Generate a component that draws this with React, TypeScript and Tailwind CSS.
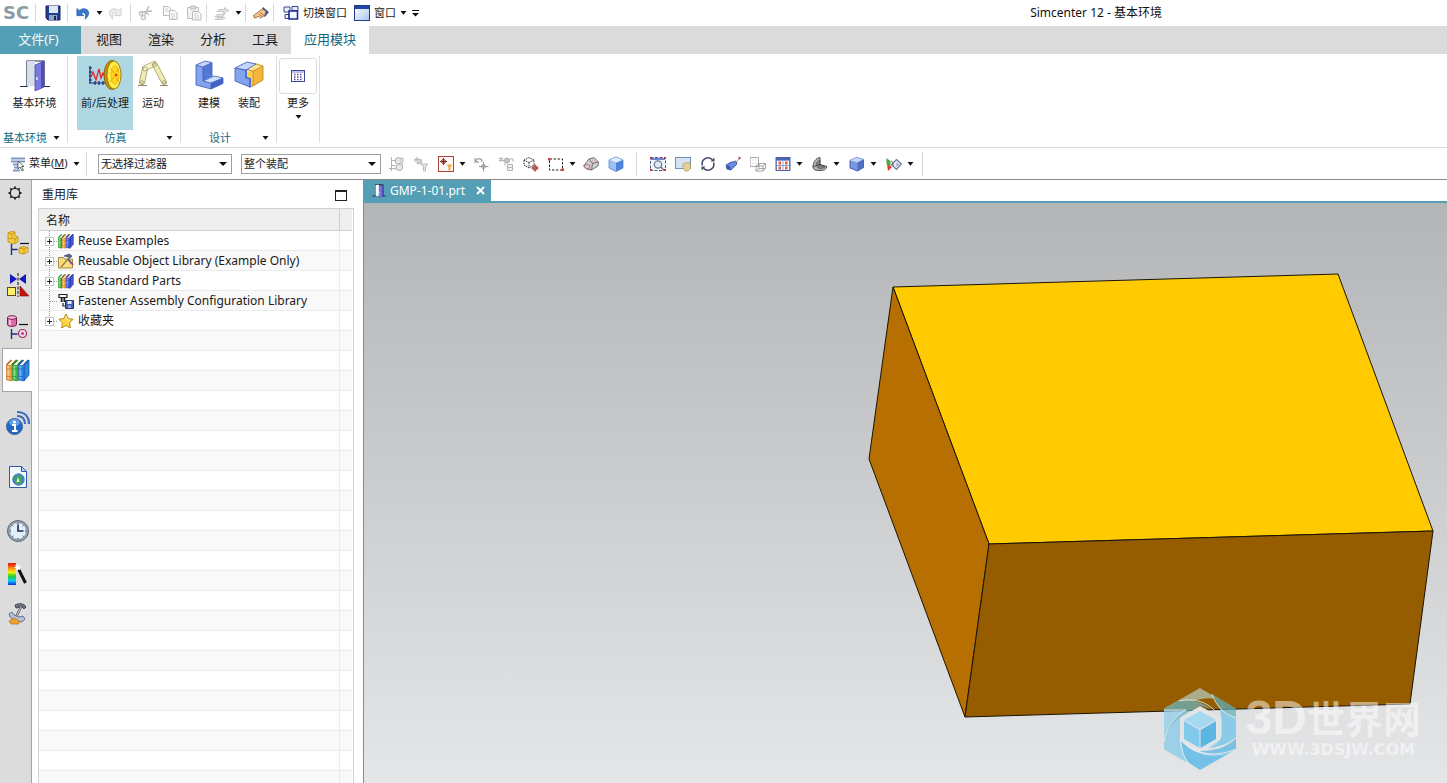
import type { ReactNode } from "react";
import clsx from "clsx";

type IconProps = { size?: number; h?: number; box?: string; children: ReactNode };

function Svg({ size = 16, h, box, children }: IconProps) {
  return (
    <svg width={size} height={h ?? size} viewBox={box ?? "0 0 16 16"} fill="none" className="shrink-0" aria-hidden="true">
      {children}
    </svg>
  );
}

function Caret() {
  return (
    <svg width="7" height="4" viewBox="0 0 7 4" className="shrink-0" aria-hidden="true">
      <path d="M0.5 0h6L3.500 3.800z" fill="#111" />
    </svg>
  );
}

/* ---------- quick access icons ---------- */

const SaveIcon = () => (
  <Svg>
    <path d="M1 1h14v14H3l-2-2z" fill="#23408f" stroke="#14245e" />
    <rect x="4" y="1" width="9" height="7" fill="#dfe8f5" />
    <rect x="4" y="10" width="8" height="5" fill="#8fa3c4" />
    <rect x="9" y="11" width="2" height="4" fill="#14245e" />
  </Svg>
);

const UndoIcon = ({ muted = false }: { muted?: boolean }) => (
  <Svg size={14}>
    <g transform={muted ? "matrix(-1 0 0 1 16 0)" : undefined}>
      <path d="M1 3v8h8L6 8.500c3-2 6-.5 4.500 6.500 5-4 5.500-10 .5-11.500C8.500 2.700 6 3.500 4 5z"
        fill={muted ? "#ececec" : "#3c78c8"} stroke={muted ? "#c4c4c4" : "#2c5ca8"} strokeWidth=".8" />
    </g>
  </Svg>
);

const CutIcon = () => (
  <Svg>
    <path d="M11 1 6.500 10M2 7l12-1M7 7l4 3" stroke="#b9b9b9" strokeWidth="1.300" />
    <circle cx="5.500" cy="12.500" r="2" stroke="#c2c2c2" strokeWidth="1.300" />
    <circle cx="3" cy="8.500" r="1.700" stroke="#c2c2c2" strokeWidth="1.300" />
  </Svg>
);

const CopyIcon = () => (
  <Svg>
    <path d="M1.500 1.500h5l2.500 2.500v6.500H1.500z" fill="#fafafa" stroke="#bdbdbd" />
    <path d="M7.500 5.500h5L15 8v6.500H7.500z" fill="#fafafa" stroke="#bdbdbd" />
    <path d="M3 4h3M3 6h4M9 9h4M9 11h4M9 13h4" stroke="#cfcfcf" />
  </Svg>
);

const PasteIcon = () => (
  <Svg>
    <path d="M1.500 2.500h11v11h-11z" fill="#f2f2f2" stroke="#bdbdbd" />
    <path d="M4.500 1h5v3h-5z" fill="#ddd" stroke="#bdbdbd" />
    <path d="M6.500 6.500h6L15 9v6H6.500z" fill="#fafafa" stroke="#bdbdbd" />
    <path d="M8 9h4M8 11h5M8 13h5" stroke="#cfcfcf" />
  </Svg>
);

const RepeatIcon = () => (
  <Svg>
    <path d="M5 4.500h6l-1-2 5 3-6 3 .5-2H3zM3 9.500h5l3-1-2 3H1zM1 14.500h8l2-2H3z" fill="#e4e4e4" stroke="#bfbfbf" strokeWidth=".8" />
  </Svg>
);

const TouchIcon = () => (
  <Svg>
    <path d="M10 2.500 15.500 7 12 11.500 8 9z" fill="#3850a8" stroke="#243578" strokeWidth=".6" />
    <path d="M.5 10.500 6 6.500 9.500 4l3.500 2-1 4-4.500 3-2-1.500L1.500 13z" fill="#f3c48d" stroke="#8d5a2b" strokeWidth=".8" />
    <path d="m7 8 4 2M6 9.500l3.500 2" stroke="#8d5a2b" strokeWidth=".6" />
  </Svg>
);

const SwitchWindowIcon = () => (
  <Svg>
    <path d="M1 2h6v5H1zM9 1.500h6v4H9zM2 9.500h4v4H2z" fill="#e8edf7" stroke="#3a4a86" />
    <path d="M6 6h8.500v8H6z" fill="#f7f9ff" stroke="#1a2d94" strokeWidth="1.600" />
  </Svg>
);

const WindowIcon = () => (
  <Svg>
    <defs>
      <linearGradient id="win" x1="0" y1="0" x2="1" y2="1">
        <stop offset="0" stopColor="#fff" />
        <stop offset="1" stopColor="#a9c5ef" />
      </linearGradient>
    </defs>
    <rect x=".5" y=".5" width="15" height="15" fill="url(#win)" stroke="#203a8c" />
    <rect x="1" y="1" width="14" height="3" fill="#2346a5" />
  </Svg>
);

/* ---------- ribbon icons ---------- */

const DoorIcon = ({ size = 32, light = false }: { size?: number; light?: boolean }) => (
  <Svg size={size} box="0 0 32 32">
    <path d="M1 27.500h7V2h17v25.500h6" stroke="#222b45" strokeWidth={light ? 2.5 : 1.200} />
    <path d="M8 2h8v25H8z" fill={light ? "#fff" : "#d4dfea"} />
    <path d="M16 6 25 2v26l-9 4z" fill="#7b79e0" stroke="#4a4aa8" strokeWidth=".8" />
    <path d="M22 3.500 25 2v26l-3 1.500z" fill="#4f4eb4" />
    <path d="M18 18v3" stroke="#e8e8ff" strokeWidth="1.500" />
  </Svg>
);

const PrePostIcon = () => (
  <Svg size={34} h={32} box="0 0 34 32">
    <path d="M2 7v17M1 24h18M1 9h3M1 13h3M1 17h3M1 21h3M7 26v-4M11 26v-4M15 26v-4" stroke="#16226e" strokeWidth="1.200" />
    <path d="m3 18 2-5 3 8 3-11 2 9 2-5 2 4 3-3" stroke="#e0242a" strokeWidth="1.300" />
    <ellipse cx="24" cy="16" rx="8" ry="14.500" fill="#c88f00" stroke="#6d5300" strokeWidth=".8" />
    <ellipse cx="26" cy="16" rx="7" ry="14" fill="#ffee4a" stroke="#8f6c00" strokeWidth=".8" />
    <ellipse cx="27" cy="16" rx="4" ry="9.500" fill="#ffd91c" stroke="#f0a01c" strokeWidth=".6" />
    <circle cx="28" cy="16" r="1.500" fill="#e8401a" />
    <path d="M22 9l4 5M22 23l4-5M30 9l-1 4M30 23l-1-4" stroke="#f08a1c" strokeWidth=".8" />
  </Svg>
);

const MotionIcon = () => (
  <Svg size={32} box="0 0 32 32">
    <path d="M1 26.500h9M23 26.500h8" stroke="#8d8960" />
    <path d="m5 23 3-13" stroke="#9c965e" strokeWidth="6" strokeLinecap="round" />
    <path d="m5 23 3-13" stroke="#f0ebb4" strokeWidth="4.600" strokeLinecap="round" />
    <path d="m8 9 9-4" stroke="#9c965e" strokeWidth="5.600" strokeLinecap="round" />
    <path d="m8 9 9-4" stroke="#f5f1c6" strokeWidth="4.200" strokeLinecap="round" />
    <path d="m18 6 9 17" stroke="#9c965e" strokeWidth="5.600" strokeLinecap="round" />
    <path d="m18 6 9 17" stroke="#f0ebb4" strokeWidth="4.200" strokeLinecap="round" />
    <g fill="#fffce0" stroke="#9c965e" strokeWidth=".8">
      <circle cx="8" cy="10" r="2" />
      <circle cx="18" cy="6" r="1.400" />
      <circle cx="5" cy="23" r="1.400" />
      <circle cx="27" cy="23" r="1.400" />
    </g>
  </Svg>
);

const ModelingIcon = () => (
  <Svg size={32} box="0 0 32 32">
    <path d="m10 7 9-3.500v14l-9 4.500z" fill="#5478d6" />
    <path d="m3 6 9-4 7 1.500L10 8z" fill="#c4d7fc" />
    <path d="m10 22 11-5 9 2-12 5z" fill="#cfe0fe" />
    <path d="m18 24 12-5v5.500L18 30z" fill="#3f62c4" />
    <path d="M3 6v20l15 4v-6l-8-2V8z" fill="#83a3ee" />
    <path d="m3 6 9-4 7 1.500V18l2-1 9 2v5.500L18 30 3 26zM3 6l7 2v14l8 2v6M10 8l9-4.500M18 24l12-5M10 22l9-4" stroke="#3e5cb4" strokeWidth=".8" />
  </Svg>
);

const AssemblyIcon = () => (
  <Svg size={32} box="0 0 32 32">
    <path d="m17 9 7-4 6 2v14l-12 7v-9h-4v-6l3-1z" fill="#ffd04a" />
    <path d="m20 12 10-5v14l-10 6z" fill="#f7b63a" />
    <path d="m14 8 10-4 6 3-10 5-6-1z" fill="#ffe78e" />
    <path d="M2 9v13l14 6v-9l-4-1v-6l4-1V9z" fill="#83a3ee" />
    <path d="m2 9 12-6 9 2-9 5v8l4 1v9l-2 1v-9l-4-1v-7z" fill="#5f82da" />
    <path d="m2 9 12-6 9 2-10 6z" fill="#c4d7fc" />
    <path d="m2 9 12-6 9 2-10 6v8l4 1v8L2 22zM2 9l11 2" stroke="#3e5cb4" strokeWidth=".8" />
    <path d="m23 5 7 2v14l-12 7M20 12l10-5M14 11l6 1v15" stroke="#b5852a" strokeWidth=".8" />
  </Svg>
);

const MoreIcon = () => (
  <Svg size={14} h={12} box="0 0 14 12">
    <rect x=".5" y=".5" width="13" height="11" fill="#fff" stroke="#3b4aa0" />
    <path d="M1 2h12" stroke="#7482d0" />
    <path d="M3 4.500h8M3 7h8M3 9.500h8" stroke="#5a4a9a" strokeWidth="1.300" strokeDasharray="1.500 1.500" />
  </Svg>
);

/* ---------- selection bar icons ---------- */

const MenuIcon = () => (
  <Svg>
    <path d="M1 2.500h14M1 5.500h14M3 8.500h6M4 11.500h5M3 14.500h7" stroke="#7d9ac4" strokeWidth="1.800" />
    <path d="M8 5v8l2-2 2 4 1.500-.7-2-3.800H14z" fill="#fff" stroke="#444" strokeWidth=".8" />
  </Svg>
);

const PartTreeIcon = () => (
  <Svg>
    <path d="M3.500 1v14M3.500 4.500h4M3.500 9.500h4M1 12.500h7" stroke="#b0b0b0" />
    <path d="M7.500 3 10 1.500l3 1v4l-2.500 1.500-3-1z" fill="#e6e6e6" stroke="#b0b0b0" />
    <path d="M8 9.500 11 8l3.500 1v4L12 14.500l-4-1zM13 2l2 .5v4l-2 1" fill="#e6e6e6" stroke="#b0b0b0" />
  </Svg>
);

const FilterBackIcon = () => (
  <Svg>
    <path d="M1 4.500 4 2v1.500h3c2 0 2 4-1 4h-2" fill="#d6d6d6" stroke="#bdbdbd" strokeWidth="1.500" />
    <path d="M8 8h7l-2.500 3v4h-2v-4z" fill="#e5e5e5" stroke="#bdbdbd" />
  </Svg>
);

const FilterPointIcon = () => (
  <Svg>
    <rect x=".5" y=".5" width="15" height="15" fill="#fff8f5" stroke="#b4413a" />
    <circle cx="5.500" cy="5.500" r="2" stroke="#7c2b28" />
    <path d="M5.500 2v7M2 5.500h7" stroke="#7c2b28" />
    <path d="M8.500 8.500h6l-2 2.500v3.500h-2V11z" fill="#f6a93c" />
  </Svg>
);

const RotatePointIcon = () => (
  <Svg>
    <path d="M2 2v4h4M2.500 5.500C4 1.500 9 1.500 9 6" stroke="#a6a6a6" strokeWidth="1.300" />
    <circle cx="10.500" cy="10.500" r="2" stroke="#9a9a9a" />
    <path d="M10.500 6v9.500M6 10.500h9.500" stroke="#9a9a9a" />
  </Svg>
);

const SnapIcon = () => (
  <Svg>
    <path d="M1 2.500h4M1 4.500h6" stroke="#b4b4b4" strokeWidth="1.400" />
    <circle cx="9" cy="4.500" r="2.500" fill="#c4c4c4" stroke="#a9a9a9" />
    <path d="M9.500 8.500h5v6h-5zM9.500 11.500h5" fill="#eee" stroke="#b5b5b5" />
    <path d="M7 7v3M12 3h3v3" stroke="#b5b5b5" />
  </Svg>
);

const CubePointIcon = () => (
  <Svg>
    <path d="M1 4 6 1.500l5 2.500v5l-5 3-5-3zM1 4l5 2.500L11 4M6 6.500V12" stroke="#222" strokeDasharray="1.400 1" />
    <circle cx="12" cy="12" r="2.300" fill="#f7dcd8" stroke="#a3282c" />
    <path d="M12 8.500v7M8.500 12h7" stroke="#a3282c" />
  </Svg>
);

const RectSelectIcon = () => (
  <Svg>
    <rect x="1.500" y="3" width="13" height="11" stroke="#222" strokeDasharray="2.500 1.500" />
    <path d="M0 2h2.500v2.500H0zM13.500 12.500H16V15h-2.500z" fill="#d83c3c" />
  </Svg>
);

const SolidIcon = () => (
  <Svg>
    <path d="M.5 10 6 3l5-1.500 4.500 4.500-.5 4-6.500 4-5-1z" fill="#cfcfd6" stroke="#555" strokeWidth=".8" />
    <path d="m6 3 3.500 4.500L15 6M9.500 7.500 8.500 14" stroke="#555" strokeWidth=".8" />
    <path d="M1 10c2-2 4-2 6 0l-1 3-3-.5z" fill="#e9c7cc" stroke="#9c5560" strokeWidth=".7" />
    <path d="M6.500 4 10 3l3 2-3 1z" fill="#e0b8be" />
  </Svg>
);

const GlassCubeIcon = () => (
  <Svg>
    <path d="m1 4 7-3 7 3v8l-7 3.500L1 12z" fill="#9cc0f2" stroke="#5a80c8" strokeWidth=".8" />
    <path d="m1 4 7 3 7-3-7-3z" fill="#e3f0ff" stroke="#88a8dc" strokeWidth=".7" />
    <path d="m8 7 7-3v8l-7 3.500z" fill="#4f82da" />
  </Svg>
);

const FitIcon = () => (
  <Svg>
    <path d="M1 2h14v12H1z" fill="#f4f7fc" />
    <path d="M.5 1.500h15v13H.5z" stroke="#4a5590" strokeDasharray="3 1.500" />
    <path d="M1 2h14v2H1z" fill="#6c86cc" />
    <circle cx="8" cy="8.500" r="3.700" fill="#dfeaf4" stroke="#6b7b8c" strokeWidth="1.300" />
    <path d="m11 11 3 3.500" stroke="#6b7b8c" strokeWidth="1.500" />
    <path d="M0 1h2v2H0zM14 1h2v2h-2zM0 13h2v2H0zM14 13h2v2h-2z" fill="#cf3030" />
  </Svg>
);

const PanIcon = () => (
  <Svg>
    <rect x=".5" y="1.500" width="15" height="11" fill="#d5e2f2" stroke="#7790b8" />
    <path d="M8 8.500 10 7l4-.5 1.500 2v4L13 15h-3l-2-3z" fill="#e8cf96" stroke="#b09350" strokeWidth=".7" />
  </Svg>
);

const RotateIcon = () => (
  <Svg>
    <path d="M2.500 9.500A5.800 5.800 0 0 1 12.500 4M13.500 6.500A5.800 5.800 0 0 1 3.500 12" stroke="#454c6c" strokeWidth="1.500" />
    <path d="M10.500 5.500h4V1.500zM5.500 10.500h-4v4z" fill="#454c6c" />
  </Svg>
);

const PerspectiveIcon = () => (
  <Svg>
    <path d="m1 9 4-2.500L11 5l1 3-6 6-4-1z" fill="#6d8ee0" stroke="#34509c" strokeWidth=".8" />
    <path d="m1 9 4 1 1 4-4-1z" fill="#3a5cb8" />
    <path d="m11 6 3-3" stroke="#999" />
    <circle cx="14.500" cy="2" r="1.200" fill="#d84040" />
  </Svg>
);

const WireIcon = () => (
  <Svg>
    <path d="M.5 1.500h8v9h-8zM3 4h.01M6 4h.01M3 7h.01M6 7h.01" stroke="#a8a8a8" strokeLinecap="round" />
    <path d="m6 10 3-2.500h6.500L13 10zM6 10v5h7v-5M13 15l2.500-2.500v-5M6 15l3-2.500V8M9 12.500h6" stroke="#9c9c9c" strokeWidth=".9" />
  </Svg>
);

const LayoutIcon = () => (
  <Svg>
    <rect x="1" y="1.500" width="14" height="13" fill="#8fa2d4" stroke="#4a5ea4" />
    <path d="M1 2h14v2H1z" fill="#4a64b4" />
    <path d="M2 5h5.500v4H2zM8.500 5H14v4H8.500zM2 10h5.500v4H2zM8.500 10H14v4H8.500z" fill="#fff" />
    <path d="M3.500 5.500h2.500v3H3.500zM10 5.500h2.500v3H10zM3.500 10.500h2.500v3H3.500zM10 10.500h2.500v3H10z" fill="#e0603c" />
  </Svg>
);

const SectionIcon = () => (
  <Svg>
    <path d="M1 11C1 6 4 2 8 1.500v7l7 2c-1 3-3 4-7 4-4 0-7-.5-7-3.500z" fill="#b6b8ba" stroke="#3c3c3c" strokeWidth=".9" />
    <path d="M4 10c0-3 1-5 4-6v4.500zM5 11.500c2 1.500 5 1.500 8-.5L8 9z" fill="#7e8184" stroke="#333" strokeWidth=".5" />
    <path d="M1 11c3-1 5-2 7-2.500" stroke="#333" strokeWidth=".7" />
  </Svg>
);

const ShadedIcon = () => (
  <Svg>
    <path d="M1 4.500 7.500 1.500l7 2v8l-6 3.500-7.500-3z" fill="#7898e4" stroke="#3a56a8" strokeWidth=".9" />
    <path d="M1 4.500 7.500 1.500l7 2-6 3z" fill="#c1d4fb" />
    <path d="m8.500 6.500 6-3v8l-6 3.500z" fill="#5070c4" />
  </Svg>
);

const PlanesIcon = () => (
  <Svg>
    <path d="m.5 2 4 3v5l-4-2z" fill="#48a848" />
    <path d="m1 8 5 3-4 4z" fill="#d83c2c" />
    <path d="m10.500 3.500 5 4.500-5 5.500-5-5z" fill="#e6ebf4" stroke="#66769c" strokeWidth="1.200" />
    <path d="M5 5c2 0 2 3 2 5" stroke="#667" />
    <path d="m10.500 6 2.500 2.500-2.500 2.500z" fill="#96a8cf" />
  </Svg>
);

/* ---------- resource bar icons ---------- */

const GearIcon = () => (
  <Svg>
    <circle cx="8" cy="8" r="4.700" stroke="#222" strokeWidth="1.300" />
    <path d="M8 1.500v2M8 12.500v2M1.500 8h2M12.500 8h2M3.300 3.300l1.400 1.400M11.300 11.300l1.400 1.400M12.700 3.300l-1.400 1.400M4.700 11.300l-1.400 1.400" stroke="#222" strokeWidth="1.800" />
  </Svg>
);

const AssemblyNavIcon = () => (
  <Svg size={24} box="0 0 24 24">
    <path d="m2 2 4-2 3 1v4l3 1v5l-4 2-6-2z" fill="#f8cb3a" stroke="#b88d20" strokeWidth=".8" />
    <path d="m2 2 4 1 3-2M6 3v4l3 1 3-2M9 8v4M2 7l4 1" stroke="#b88d20" strokeWidth=".8" />
    <path d="M14 12.500h9" stroke="#111" strokeWidth="1.200" />
    <path d="M5.500 13v11M5.500 18.500h6" stroke="#1d2c8a" strokeWidth="1.400" />
    <path d="m13 17 4-1.500 5 1V21l-4 2-5-1z" fill="#f8cb3a" stroke="#b88d20" strokeWidth=".8" />
    <path d="m13 17 5 1 4-1.500M18 18v5" stroke="#b88d20" strokeWidth=".8" />
  </Svg>
);

const ConstraintNavIcon = () => (
  <Svg size={24} box="0 0 24 24">
    <path d="M4 1v10l7-5zM20 1v10l-7-5z" fill="#1418c0" />
    <path d="M12 0v24" stroke="#111" strokeDasharray="3 1.500" />
    <rect x="1.500" y="14.500" width="8" height="8" fill="#fff06a" stroke="#5b4a10" />
    <path d="M14 13v10h9z" fill="#c81410" stroke="#7a0c0a" strokeWidth=".6" />
  </Svg>
);

const PartNavIcon = () => (
  <Svg size={24} box="0 0 24 24">
    <path d="M1.500 2.500v7c0 2.500 9 2.500 9 0v-7z" fill="#d66ca8" stroke="#7c1850" />
    <path d="M4 4v6" stroke="#f5bfdc" strokeWidth="2" />
    <ellipse cx="6" cy="2.500" rx="4.500" ry="1.800" fill="#f5bfdc" stroke="#7c1850" />
    <path d="M13 9.500h9" stroke="#111" strokeWidth="1.200" />
    <path d="M5.500 14v10M5.500 19h6" stroke="#1d2c8a" strokeWidth="1.400" />
    <circle cx="16.500" cy="18.500" r="4" fill="#f8d7e8" stroke="#9c2466" strokeWidth="1.200" />
    <circle cx="16.500" cy="18.500" r="1.300" fill="#9c2466" />
  </Svg>
);

const orange = { fill: "#f2a03c", shine: "#fcc680", edge: "#b8661a" };
const green = { fill: "#3cba42", shine: "#86e080", edge: "#1d8426" };
const blue = { fill: "#2f86e4", shine: "#74b4fa", edge: "#1a59b0" };
const violet = { fill: "#4058dc", shine: "#8094fa", edge: "#2a2f98" };

const shelf = [orange, green, blue];
const smallShelf = [green, orange, violet];

function BooksIcon({ size = 24, books = shelf }: { size?: number; books?: typeof shelf }) {
  const last = books[books.length - 1];
  return (
    <Svg size={size} box="0 0 24 24">
      <path d="m18 7 5-5v15l-5 6z" fill={last.fill} stroke={last.edge} strokeWidth=".8" />
      {books.map((b, i) => (
        <g key={b.fill} transform={`translate(${i * 6} 0)`}>
          <path d="m.5 7 5-5h5l-5 5z" fill="#f8faf2" />
          <path d="m.5 7 5-5M5.500 7l5-5" stroke={b.edge} strokeWidth="1.600" />
          <path d="M.5 7.500h5.500V23l-5.500-1z" fill={b.fill} stroke={b.edge} strokeWidth=".6" />
          <path d="M2.400 8v13" stroke={b.shine} strokeWidth="1.800" />
          <path d="M.5 11h5M.5 18.500h5" stroke={b.edge} strokeWidth=".6" />
        </g>
      ))}
    </Svg>
  );
}

const HdInfoIcon = () => (
  <Svg size={26} box="0 0 26 26">
    <path d="M12 6c5 0 8 3 8 8M12 2c8 0 12 5 12 12" stroke="#3d6cc0" strokeWidth="2.200" />
    <circle cx="9.500" cy="16.500" r="8" fill="#2468c8" stroke="#3a62a0" />
    <ellipse cx="9.500" cy="12.500" rx="5.500" ry="3.500" fill="#7db4f2" opacity=".7" />
    <circle cx="9.500" cy="12" r="1.600" fill="#fff" />
    <path d="M7 15h3v6M7 21h5.500" stroke="#fff" strokeWidth="2" />
  </Svg>
);

const WebPageIcon = () => (
  <Svg size={24} box="0 0 24 24">
    <path d="M3.500 1.500h12l5 5v16h-17z" fill="#f4faff" stroke="#2f5ca8" />
    <path d="M15.500 1.500v5h5z" fill="#bcd4f2" stroke="#2f5ca8" />
    <circle cx="12.500" cy="14.500" r="5.800" fill="#3e88d4" stroke="#3a6a98" strokeWidth=".7" />
    <path d="M12 10c3 0 4 3 4 5s-2 4-4 4-3-2-2-4 0-4 2-5zM7.500 13l2-2-.5 4z" fill="#44a848" />
    <path d="m10.500 17 1.500-5 1.500 5z" fill="#e8ffe8" />
  </Svg>
);

const ClockIcon = () => (
  <Svg size={24} box="0 0 24 24">
    <circle cx="12" cy="12" r="10.500" fill="#9aa6b2" stroke="#5c6671" />
    <circle cx="12" cy="12" r="8.500" fill="#e2f0fb" stroke="#76838f" strokeWidth=".7" />
    <path d="M12 5.500V12h5.500" stroke="#1b2a50" strokeWidth="1.600" />
    <path d="M12 4v1M12 19v1M4 12h1M19 12h1M6.500 6.500l.7.700M17.500 6.500l-.7.700M6.500 17.500l.7-.7M17.500 17.500l-.7-.7" stroke="#223" />
  </Svg>
);

const PaletteIcon = () => (
  <Svg size={24} box="0 0 24 24">
    <defs>
      <linearGradient id="spectrum" x1="0" y1="0" x2="0" y2="1">
        <stop offset="0" stopColor="#e01010" />
        <stop offset=".25" stopColor="#ff9010" />
        <stop offset=".42" stopColor="#f8f010" />
        <stop offset=".6" stopColor="#20d030" />
        <stop offset=".8" stopColor="#10c8f0" />
        <stop offset="1" stopColor="#1030e0" />
      </linearGradient>
    </defs>
    <rect x="2" y="1" width="8" height="22" fill="url(#spectrum)" />
    <path d="m12 6 7.500 15" stroke="#111" strokeWidth="3" />
    <path d="m11 4 1.800 3.500" stroke="#fff" strokeWidth="3" />
    <path d="M11 2v7M8 5.500h7M9 3l5 5M14 3 9 8" stroke="#fff" strokeWidth=".8" />
  </Svg>
);

const ToolsIcon = () => (
  <Svg size={24} box="0 0 24 24">
    <path d="M9 3c4-2 9-2 11 2l-2 2-2-2-6 1z" fill="#6e747c" stroke="#30343a" strokeWidth=".8" />
    <path d="M15 5 9 17" stroke="#4a4f56" strokeWidth="2.400" />
    <path d="M15 5 9 17" stroke="#d9e0e8" />
    <path d="m3 12 3-2 2 3 5 2 4-1 2 3-3 3-4-1-5-2-3-2z" fill="#b4bfd8" stroke="#4d5978" strokeWidth=".8" />
    <path d="m3 19 5-3 5 3v3H5z" fill="#f0a030" stroke="#b4782c" strokeWidth=".8" />
  </Svg>
);

/* ---------- tree icons ---------- */

const ObjectLibraryIcon = () => (
  <Svg>
    <path d="M.5 4.500h5l1 1.500h8v9H.5z" fill="#f8dc84" stroke="#a88a3c" />
    <path d="m3 14 8-9" stroke="#a8844a" strokeWidth="1.500" />
    <path d="m6 3 5-2 3 2-2 2-2-1z" fill="#5a6896" stroke="#2d3758" strokeWidth=".6" />
    <path d="m10 6 4 5" stroke="#3a4a9c" strokeWidth="1.500" />
    <path d="m13 9 2 3" stroke="#c03a80" strokeWidth="1.500" />
  </Svg>
);

const FastenerIcon = () => (
  <Svg>
    <path d="M1 1.500h8v3H1zM3.500 4.500V9M6.500 4.500V9M2.500 6h5M2.500 8h5M5 10v3h2" stroke="#222" strokeWidth="1.200" />
    <path d="M7.500 7.500h8v8h-8z" fill="#3f5eb8" stroke="#24346e" />
    <path d="M9.500 8h4v3h-4z" fill="#e8eefa" />
    <path d="M10 12.500h3V15h-3z" fill="#9db0d8" />
  </Svg>
);

const StarIcon = () => (
  <Svg>
    <path d="m8 1 2.200 4.600 5 .7-3.700 3.500.9 5.200L8 12.500 3.600 15l.9-5.200L.8 6.300l5-.7z" fill="#ffd93b" stroke="#b88a1c" />
    <path d="m8 3.500 1 3.500 3 .3" stroke="#fff6c0" />
  </Svg>
);

/* ---------- chrome ---------- */

function IconButton({ label, className, children }: { label: string; className?: string; children: ReactNode }) {
  return (
    <button aria-label={label} className={clsx("flex h-6 shrink-0 items-center justify-center", className ?? "w-6")}>
      {children}
    </button>
  );
}

function Divider({ className }: { className?: string }) {
  return <div className={clsx("w-px shrink-0 bg-[#d8d8d8]", className)} />;
}

function TitleBar() {
  return (
    <header className="flex h-[26px] shrink-0 items-center text-[11px]">
      <span className="w-8 shrink-0 pl-[3px] font-['DejaVu_Sans'] text-[18px] leading-6 font-bold text-[#8c9ba5]">SC</span>
      <Divider className="mx-[3px] h-[18px]" />
      <IconButton label="保存" className="w-7"><SaveIcon /></IconButton>
      <Divider className="mr-[3px] h-[18px]" />
      <IconButton label="撤销"><UndoIcon /></IconButton>
      <IconButton label="撤销列表" className="w-2"><Caret /></IconButton>
      <IconButton label="重做"><UndoIcon muted /></IconButton>
      <Divider className="mx-[3px] h-[18px]" />
      <IconButton label="剪切"><CutIcon /></IconButton>
      <IconButton label="复制"><CopyIcon /></IconButton>
      <IconButton label="粘贴"><PasteIcon /></IconButton>
      <Divider className="mr-[3px] h-[18px]" />
      <IconButton label="重复命令"><RepeatIcon /></IconButton>
      <IconButton label="重复命令列表" className="w-2"><Caret /></IconButton>
      <Divider className="mx-[3px] h-[18px]" />
      <IconButton label="触控模式"><TouchIcon /></IconButton>
      <Divider className="mr-[9px] h-[18px]" />
      <button className="flex shrink-0 items-center gap-1"><SwitchWindowIcon />切换窗口</button>
      <button className="ml-[7px] flex shrink-0 items-center gap-1"><WindowIcon />窗口<Caret /></button>
      <IconButton label="自定义" className="ml-1 w-2">
        <Svg size={7} h={7} box="0 0 7 7">
          <path d="M0 .5h7" stroke="#111" />
          <path d="M0 3h7L3.500 6.500z" fill="#111" />
        </Svg>
      </IconButton>
      <h1 className="mr-[285px] ml-auto text-[12px] whitespace-nowrap text-[#111]">Simcenter 12 - 基本环境</h1>
    </header>
  );
}

const tabs = ["视图", "渲染", "分析", "工具"];

function RibbonTabs() {
  return (
    <nav className="flex h-7 shrink-0 bg-[#dbdbdb] text-[13px]">
      <button className="mr-0.5 w-[81px] bg-[#549fb5] pr-1 text-[#f0fbff]">文件(F)</button>
      {tabs.map((tab) => (
        <button key={tab} className="w-[52px]">{tab}</button>
      ))}
      <button className="w-[78px] bg-white text-[#0f6680]">应用模块</button>
    </nav>
  );
}

function RibbonGroup({ title, className, children }: { title?: string; className?: string; children: ReactNode }) {
  return (
    <section className={clsx("flex shrink-0 flex-col border-r border-[#dcdcdc]", className)}>
      <div className="flex h-[74px]">{children}</div>
      {title && (
        <div className="flex h-4 items-center pr-[7px] text-[11px] text-[#136880]">
          <h2 className="flex-1 pr-[3px] text-center">{title}</h2>
          <Caret />
        </div>
      )}
    </section>
  );
}

function RibbonButton({ label, className, active, children }: { label: string; className?: string; active?: boolean; children: ReactNode }) {
  return (
    <button className={clsx("flex h-[74px] flex-col items-center pt-[3px] text-[11px] leading-4 whitespace-nowrap", className, active && "bg-[#afd7e1]")}>
      {children}
      <span className="mt-1">{label}</span>
    </button>
  );
}

function Ribbon() {
  return (
    <div className="flex h-[94px] shrink-0 border-b border-[#dcdcdc] pt-0.5 pb-1">
      <RibbonGroup title="基本环境" className="w-[68px]">
        <RibbonButton label="基本环境" className="w-[68px] pl-0.5"><DoorIcon /></RibbonButton>
      </RibbonGroup>
      <RibbonGroup title="仿真" className="w-[113px]">
        <RibbonButton label="前/后处理" className="ml-[9px] w-14" active><PrePostIcon /></RibbonButton>
        <RibbonButton label="运动" className="w-10"><MotionIcon /></RibbonButton>
      </RibbonGroup>
      <RibbonGroup title="设计" className="w-24">
        <RibbonButton label="建模" className="ml-2 w-10"><ModelingIcon /></RibbonButton>
        <RibbonButton label="装配" className="w-10"><AssemblyIcon /></RibbonButton>
      </RibbonGroup>
      <RibbonGroup className="w-[43px]">
        <button className="flex w-full flex-col items-center pt-0.5 text-[11px] leading-4">
          <span className="flex h-9 w-[38px] items-center justify-center rounded-[3px] border border-[#dcdcdc]"><MoreIcon /></span>
          <span className="mt-px mb-1">更多</span>
          <Caret />
        </button>
      </RibbonGroup>
    </div>
  );
}

function FilterSelect({ label, value, className }: { label: string; value: string; className: string }) {
  return (
    <label className={clsx("relative shrink-0", className)}>
      <select aria-label={label} className="block h-5 w-full appearance-none border border-[#a0a0a0] bg-white px-0.5 text-[11px] leading-4 outline-none">
        <option>{value}</option>
      </select>
      <span className="pointer-events-none absolute top-2 right-[5px]">
        <Svg size={8} h={4} box="0 0 8 4"><path d="M0 0h8L4 4z" fill="#111" /></Svg>
      </span>
    </label>
  );
}

type Tool = { label: string; icon: ReactNode; menu?: boolean };

const selectTools: Tool[] = [
  { label: "装配导航", icon: <PartTreeIcon /> },
  { label: "重置过滤器", icon: <FilterBackIcon /> },
  { label: "点过滤器", icon: <FilterPointIcon />, menu: true },
  { label: "重置点", icon: <RotatePointIcon /> },
  { label: "捕捉", icon: <SnapIcon /> },
  { label: "允许选择隐藏", icon: <CubePointIcon /> },
  { label: "矩形选择", icon: <RectSelectIcon />, menu: true },
  { label: "高亮面", icon: <SolidIcon /> },
  { label: "体", icon: <GlassCubeIcon /> },
];

const viewTools: Tool[] = [
  { label: "适合窗口", icon: <FitIcon /> },
  { label: "平移", icon: <PanIcon /> },
  { label: "旋转", icon: <RotateIcon /> },
  { label: "透视", icon: <PerspectiveIcon /> },
  { label: "线框", icon: <WireIcon /> },
  { label: "布局", icon: <LayoutIcon />, menu: true },
  { label: "截面", icon: <SectionIcon />, menu: true },
  { label: "着色", icon: <ShadedIcon />, menu: true },
  { label: "显示平面", icon: <PlanesIcon />, menu: true },
];

function ToolGroup({ tools, gap }: { tools: Tool[]; gap: string }) {
  return tools.map((tool) => (
    <div key={tool.label} className={clsx("flex shrink-0", tool.menu && gap)}>
      <IconButton label={tool.label} className="w-[25px]">{tool.icon}</IconButton>
      {tool.menu && <IconButton label={tool.label + "列表"} className="w-2"><Caret /></IconButton>}
    </div>
  ));
}

function SelectionBar() {
  return (
    <div className="flex h-8 shrink-0 items-center border-b border-[#8a8a8a] text-[11px]">
      <button className="ml-[10px] flex w-[70px] shrink-0 items-center gap-[3px]">
        <MenuIcon />
        <span className="flex-1 text-left whitespace-nowrap">菜单(<u>M</u>)</span>
        <Caret />
      </button>
      <Divider className="ml-[6px] h-6" />
      <FilterSelect label="类型过滤器" value="无选择过滤器" className="ml-[11px] w-[134px]" />
      <FilterSelect label="选择范围" value="整个装配" className="mr-0.5 ml-[9px] w-[140px]" />
      <ToolGroup tools={selectTools} gap="mr-0.5" />
      <Divider className="mx-2 h-6" />
      <ToolGroup tools={viewTools} gap="mr-1" />
      <Divider className="ml-1 h-6" />
    </div>
  );
}

function ResourceBar() {
  return (
    <aside className="flex w-8 shrink-0 flex-col border-r border-[#a6a6a6] bg-[#dcdcdc] pl-0.5">
      <IconButton label="资源条选项" className="mr-1 mb-4 h-[26px]"><GearIcon /></IconButton>
      <button aria-label="装配导航器" className="flex h-[42px] items-center justify-end pr-px"><AssemblyNavIcon /></button>
      <button aria-label="约束导航器" className="flex h-[42px] items-center justify-end pr-px"><ConstraintNavIcon /></button>
      <button aria-label="部件导航器" className="flex h-[42px] items-center justify-end pr-px"><PartNavIcon /></button>
      <button aria-label="重用库" className="-mr-px flex h-11 items-center justify-center border-y border-l border-[#a6a6a6] bg-white">
        <BooksIcon />
      </button>
      <button aria-label="HD3D 工具" className="mt-1 flex h-[54px] items-center justify-end"><HdInfoIcon /></button>
      <button aria-label="Web 浏览器" className="flex h-[54px] items-center justify-end pr-px"><WebPageIcon /></button>
      <button aria-label="历史记录" className="flex h-[54px] items-center justify-end pr-px"><ClockIcon /></button>
      <button aria-label="系统材料" className="mb-2 flex h-8 items-center justify-end pr-px"><PaletteIcon /></button>
      <button aria-label="加工向导" className="flex h-8 items-center justify-end pr-px"><ToolsIcon /></button>
    </aside>
  );
}

const libraries = [
  { name: "Reuse Examples", icon: <BooksIcon size={16} books={smallShelf} />, expandable: true },
  { name: "Reusable Object Library (Example Only)", icon: <ObjectLibraryIcon />, expandable: true },
  { name: "GB Standard Parts", icon: <BooksIcon size={16} books={smallShelf} />, expandable: true },
  { name: "Fastener Assembly Configuration Library", icon: <FastenerIcon />, expandable: false },
  { name: "收藏夹", icon: <StarIcon />, expandable: true },
];

function TreeToggle({ expandable, last }: { expandable: boolean; last: boolean }) {
  return (
    <Svg size={19} h={20} box="0 0 19 20">
      <path d={last ? "M10.500 0v10" : "M10.500 0v20"} stroke="#9a9a9a" strokeDasharray="1 1" />
      <path d="M11 10.500h8" stroke="#9a9a9a" strokeDasharray="1 1" />
      {expandable && (
        <>
          <rect x="6.500" y="6.500" width="8" height="8" fill="#fff" stroke="#c4c4c4" />
          <path d="M8 10.500h5M10.500 8v5" stroke="#222" />
        </>
      )}
    </Svg>
  );
}

function ReuseLibrary() {
  const blanks = Array.from({ length: 60 }, (_, i) => i);
  return (
    <section className="flex w-[331px] shrink-0 flex-col pr-[9px] pl-[6px]">
      <div className="flex h-7 shrink-0 items-end justify-between pr-[7px] pb-[3px] pl-1 text-[12px] leading-5">
        <h2>重用库</h2>
        <button aria-label="最大化" className="mb-1 h-[11px] w-3 border border-t-2 border-[#222]" />
      </div>
      <div className="min-h-0 flex-1 overflow-hidden border-x border-t border-[#d2d2d2] pr-px">
        <table className="w-full table-fixed border-separate border-spacing-0 text-[12px]">
          <thead>
            <tr className="bg-[#efefef]">
              <th className="h-[22px] border-r border-b border-[#d0d0d0] p-0 pt-0.5 pl-[7px] text-left leading-4 font-normal">名称</th>
              <th aria-label="状态" className="w-3 border-b border-[#d0d0d0] p-0" />
            </tr>
          </thead>
          <tbody>
            {libraries.map((lib, i) => (
              <tr key={lib.name} className="odd:bg-white even:bg-[#f9f9f9]">
                <td className="h-5 border-r border-b border-[#ebebeb] p-0">
                  <div className="-mb-px flex h-5 items-center whitespace-nowrap">
                    <TreeToggle expandable={lib.expandable} last={i === libraries.length - 1} />
                    {lib.icon}
                    <span className="ml-1 leading-4">{lib.name}</span>
                  </div>
                </td>
                <td className="border-b border-[#ebebeb] p-0" />
              </tr>
            ))}
            {blanks.map((i) => (
              <tr key={i} className="odd:bg-white even:bg-[#f9f9f9]">
                <td className="h-5 border-r border-b border-[#ebebeb] p-0" />
                <td className="border-b border-[#ebebeb] p-0" />
              </tr>
            ))}
          </tbody>
        </table>
      </div>
    </section>
  );
}

function Watermark() {
  return (
    <div className="absolute right-[26px] bottom-[13px] flex items-center gap-[10px] text-white/50">
      <svg width="72" height="82" viewBox="0 0 72 82" aria-hidden="true">
        <g opacity=".72">
          <path d="M36 0 59 13.500C48 8 30 9 15 22L0 20.500z" fill="#b4cbc0" />
          <path d="M0 20.500 14 13c14-2 25 1 33 8L36 17.500 17 29 0 54z" fill="#69b7c8" />
          <path d="M0 21.500 22 22C8 31 1 41 0 54z" fill="#8ecdea" />
          <path d="M48 6 72 20.500v10C67 29 60 25 55 20z" fill="#62b3bb" />
          <path d="M56 21c5 5 11 7 16 8v20C62 58 54 58 43 61l14-11V28z" fill="#6cc3ea" />
          <path d="M0 55C2 43 8 36 16 29v22c0 9 3 17 8 24L0 61.500z" fill="#83c9eb" />
          <path d="M17 53c13 14 33 19 52 10L36 82 25 75c-6-7-8-14-8-22z" fill="#49b4e9" />
          <path d="M72 50v11.500C56 69 43 67 36 63c15 0 28-4 36-13z" fill="#54b4e6" />
        </g>
        <path d="M36 18 56 29v23L36 63 17 52V29z" fill="#e2e5e7" />
        <path d="m36 23 16 9-16 9-16-9z" fill="#a6d8f0" />
        <path d="m20 33 15.500 9v18L20 51z" fill="#83c9ec" />
        <path d="m52 33-15.500 9v18L52 51z" fill="#5cb6e4" />
        <path d="M0 54C2 40 12 26 22 22H0M15 13c14-3 27 0 36 10M48 6c4 12 12 20 24 24M57 30v18c-2 6-8 10-14 13M17 52c12 14 33 18 55 9M17 46c-1 14 3 24 8 30" stroke="#e6eff3" strokeOpacity=".8" fill="none" />
      </svg>
      <div className="font-bold">
        <div className="flex items-center leading-10">
          <span className="font-['Liberation_Sans'] text-[48px]">3D</span>
          <span className="text-[38px]">世界网</span>
        </div>
        <div className="pt-0.5 text-center font-['DejaVu_Sans'] text-[16px] leading-5">WWW.3DSJW.COM</div>
      </div>
    </div>
  );
}

function Viewport() {
  return (
    <main className="flex min-w-0 flex-1 flex-col border-l border-[#8a8a8a]">
      <div className="flex h-[23px] shrink-0 border-b-2 border-[#549fb5]">
        <div className="flex w-[127px] items-center bg-[#549fb5] pl-2 text-[12px] text-white">
          <DoorIcon size={14} light />
          <span className="ml-1 flex-1 whitespace-nowrap">GMP-1-01.prt</span>
          <button aria-label="关闭" className="mr-[6px]">
            <Svg size={9} box="0 0 9 9"><path d="m1 1 7 7M8 1 1 8" stroke="#fff" strokeWidth="2" /></Svg>
          </button>
        </div>
      </div>
      <div className="relative min-h-0 flex-1 overflow-hidden bg-linear-to-b from-[#b4b5b7] to-[#e5e6e8]">
        <svg className="block h-full w-full" viewBox="0 0 1083 580" preserveAspectRatio="xMidYMid slice" role="img" aria-label="GMP-1-01">
          <g stroke="#1a1405" strokeWidth="1" strokeLinejoin="round">
            <path d="M529 84 974 71l95 257-444 13z" fill="#ffcb00" />
            <path d="m529 84 96 257-24 173-96-258z" fill="#b66f00" />
            <path d="m625 341 444-13-23 173-445 13z" fill="#965c00" />
          </g>
        </svg>
        <Watermark />
      </div>
    </main>
  );
}

export default function App() {
  return (
    <div className="flex h-screen flex-col overflow-hidden bg-white font-['Noto_Sans','Noto_Sans_CJK_SC',sans-serif] text-[#1a1a1a]">
      <TitleBar />
      <RibbonTabs />
      <Ribbon />
      <SelectionBar />
      <div className="flex min-h-0 flex-1">
        <ResourceBar />
        <ReuseLibrary />
        <Viewport />
      </div>
    </div>
  );
}
